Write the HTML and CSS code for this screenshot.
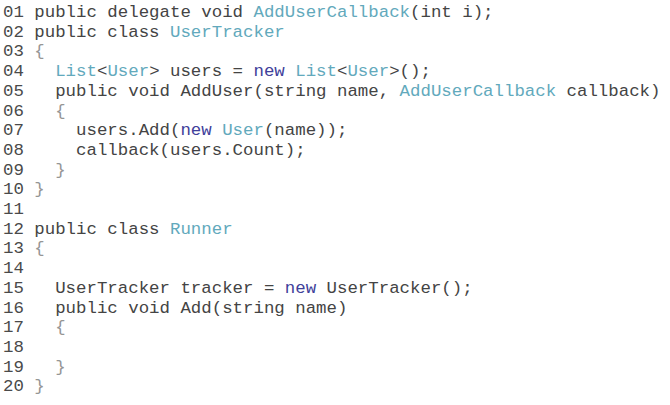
FILE: index.html
```html
<!DOCTYPE html>
<html>
<head>
<meta charset="utf-8">
<link rel="stylesheet" href="styles.css">
</head>
<body>
<pre class="code"><span class="ln">01 </span>public delegate void <span class="t">AddUserCallback</span>(int i);
<span class="ln">02 </span>public class <span class="t">UserTracker</span>
<span class="ln">03 </span><span class="b">{</span>
<span class="ln">04 </span>  <span class="t">List</span>&lt;<span class="t">User</span>&gt; users = <span class="k">new</span> <span class="t">List</span>&lt;<span class="t">User</span>&gt;();
<span class="ln">05 </span>  public void AddUser(string name, <span class="t">AddUserCallback</span> callback)
<span class="ln">06 </span>  <span class="b">{</span>
<span class="ln">07 </span>    users.Add(<span class="k">new</span> <span class="t">User</span>(name));
<span class="ln">08 </span>    callback(users.Count);
<span class="ln">09 </span>  <span class="b">}</span>
<span class="ln">10 </span><span class="b">}</span>
<span class="ln">11</span>
<span class="ln">12 </span>public class <span class="t">Runner</span>
<span class="ln">13 </span><span class="b">{</span>
<span class="ln">14</span>
<span class="ln">15 </span>  UserTracker tracker = <span class="k">new</span> UserTracker();
<span class="ln">16 </span>  public void Add(string name)
<span class="ln">17 </span>  <span class="b">{</span>
<span class="ln">18</span>
<span class="ln">19 </span>  <span class="b">}</span>
<span class="ln">20 </span><span class="b">}</span></pre>
</body>
</html>
```
FILE: styles.css
```css
html, body {
  margin: 0;
  padding: 0;
  background: #ffffff;
}
.code {
  margin: 0;
  padding: 3px 0 0 3px;
  font-family: "Liberation Mono", "Courier New", monospace;
  font-size: 17.4px;
  line-height: 19.7px;
  color: #444444;
  white-space: pre;
}
.ln {
  color: #4a4a4a;
}
.t {
  color: #62a9bc;
}
.k {
  color: #40409a;
}
.b {
  color: #959595;
}
```
